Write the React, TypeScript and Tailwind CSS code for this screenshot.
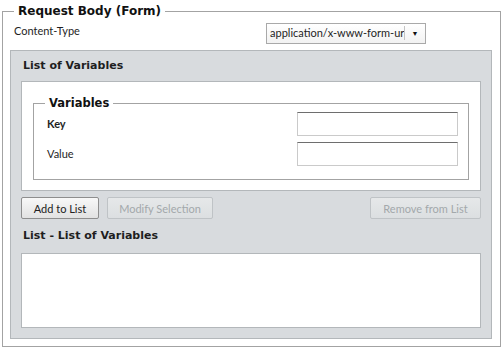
import React from "react";

const font = { fontFamily: 'Lato, "Open Sans", sans-serif' };
const heading = { fontFamily: '"DejaVu Sans", Verdana, sans-serif' };

const Button = ({ label, disabled, className }: { label: string; disabled?: boolean; className?: string }) => (
  <button
    className={
      "h-[22px] rounded-[2px] border text-[11px] leading-none " +
      (disabled
        ? "border-[#bfc3c6] bg-gradient-to-b from-[#e6e8e9] to-[#dcdfe1] text-[#a3a8ab] "
        : "border-[#8e8e8e] bg-gradient-to-b from-[#f8f8f8] to-[#e2e2e2] text-[#222] ") +
      (className ?? "")
    }
  >
    {label}
  </button>
);

const TextInput = () => (
  <div className="h-[24px] w-[161px] border border-[#cacaca] border-t-[#6e6e6e] bg-white" />
);

export default function App() {
  return (
    <div className="w-[503px] h-[350px] bg-white pl-[2px] pr-[2px] text-[#1e1e1e]" style={font}>
      <fieldset className="h-[347px] border border-[#a3a3a3] pl-[7px] pr-[8px]">
        <legend className="ml-[4px] px-[4px] text-[12px] font-bold leading-[22px] text-[#111]" style={heading}>
          Request Body (Form)
        </legend>

        <div className="flex h-[22px] items-center justify-between pl-[4px] pr-[66px]">
          <span className="mb-[3px] text-[11px]">Content-Type</span>
          <div className="flex h-[21px] w-[160px] items-center border border-[#a9a9a9] bg-gradient-to-b from-white to-[#f2f2f2]">
            <span className="flex-1 overflow-hidden whitespace-nowrap pl-[3px] text-[11px]">
              application/x-www-form-urlencoded
            </span>
            <span className="h-[14px] w-px bg-[#c4c4c4]" />
            <span className="flex w-[20px] justify-center text-[7px] text-[#111]">▼</span>
          </div>
        </div>

        <div className="mt-[6px] h-[289px] w-[482px] border border-[#b3b7ba] bg-[#d8dbde] px-[10px]">
          <div className="flex h-[30px] items-center pl-[2px] text-[11px] font-bold" style={heading}>
            List of Variables
          </div>

          <div className="h-[110px] border border-[#b3b7ba] bg-white px-[11px]">
            <fieldset className="mt-[13px] h-[85px] border border-[#a3a3a3] pl-[13px] pr-[10px]">
              <legend className="-ml-[2px] px-[4px] text-[11.5px] font-bold leading-[16px] text-[#111]" style={heading}>
                Variables
              </legend>
              <div className="mt-[1px] flex flex-col gap-[6px]">
                <div className="flex items-center justify-between">
                  <span className="text-[11px] font-bold">Key</span>
                  <TextInput />
                </div>
                <div className="flex items-center justify-between">
                  <span className="text-[11px]">Value</span>
                  <TextInput />
                </div>
              </div>
            </fieldset>
          </div>

          <div className="mt-[6px] flex items-center">
            <Button label="Add to List" className="w-[78px]" />
            <Button label="Modify Selection" disabled className="ml-[8px] w-[106px]" />
            <Button label="Remove from List" disabled className="ml-auto w-[111px]" />
          </div>

          <div className="flex h-[34px] items-center pl-[2px] text-[11px] font-bold" style={heading}>
            List - List of Variables
          </div>

          <div className="h-[75px] border border-[#b3b7ba] bg-white" />
        </div>
      </fieldset>
    </div>
  );
}
